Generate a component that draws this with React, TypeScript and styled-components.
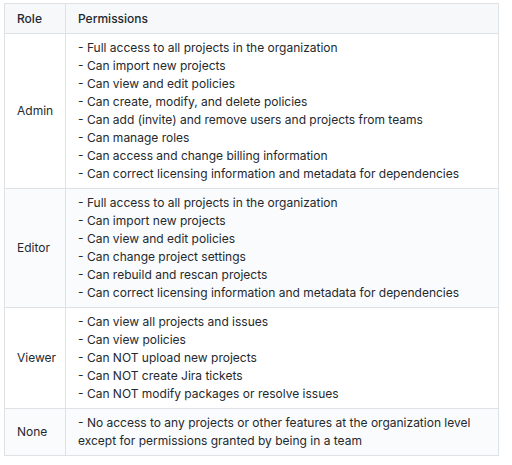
import React from "react";
import styled, { createGlobalStyle } from "styled-components";

const Global = createGlobalStyle`
  html, body { margin: 0; padding: 0; background: #ffffff; }
  body { font-family: Inter, "Noto Sans", "Liberation Sans", sans-serif; }
`;

const Page = styled.div`
  padding: 3px 13px 0 4px;
  width: 512px;
  box-sizing: border-box;
`;

const Table = styled.table`
  border-collapse: collapse;
  width: 495px;
  table-layout: fixed;
  font-size: 12px;
  line-height: 18px;
  color: #24292e;
`;

const HeadCell = styled.th<{ $w?: number }>`
  text-align: left;
  font-weight: 500;
  background: #f6f8fa;
  border: 1px solid #dfe2e5;
  padding: 6px 12px 5px;
  ${(p) => (p.$w ? `width: ${p.$w}px;` : "")}
`;

const Row = styled.tr<{ $alt: boolean }>`
  background: ${(p) => (p.$alt ? "#fafbfc" : "#ffffff")};
`;

const RoleCell = styled.td`
  border: 1px solid #dfe2e5;
  padding: 5px 12px;
  vertical-align: middle;
`;

const PermCell = styled.td`
  border: 1px solid #dfe2e5;
  padding: 5px 12px;
  vertical-align: top;
`;

const Line = styled.div`
  white-space: nowrap;
`;

const data: { role: string; perms: string[] }[] = [
  {
    role: "Admin",
    perms: [
      "- Full access to all projects in the organization",
      "- Can import new projects",
      "- Can view and edit policies",
      "- Can create, modify, and delete policies",
      "- Can add (invite) and remove users and projects from teams",
      "- Can manage roles",
      "- Can access and change billing information",
      "- Can correct licensing information and metadata for dependencies",
    ],
  },
  {
    role: "Editor",
    perms: [
      "- Full access to all projects in the organization",
      "- Can import new projects",
      "- Can view and edit policies",
      "- Can change project settings",
      "- Can rebuild and rescan projects",
      "- Can correct licensing information and metadata for dependencies",
    ],
  },
  {
    role: "Viewer",
    perms: [
      "- Can view all projects and issues",
      "- Can view policies",
      "- Can NOT upload new projects",
      "- Can NOT create Jira tickets",
      "- Can NOT modify packages or resolve issues",
    ],
  },
  {
    role: "None",
    perms: [
      "- No access to any projects or other features at the organization level",
      "except for permissions granted by being in a team",
    ],
  },
];

export default function App() {
  return (
    <Page>
      <Global />
      <Table>
        <thead>
          <tr>
            <HeadCell $w={36}>Role</HeadCell>
            <HeadCell>Permissions</HeadCell>
          </tr>
        </thead>
        <tbody>
          {data.map((r, i) => (
            <Row key={r.role} $alt={i % 2 === 1}>
              <RoleCell>{r.role}</RoleCell>
              <PermCell>
                {r.perms.map((p) => (
                  <Line key={p}>{p}</Line>
                ))}
              </PermCell>
            </Row>
          ))}
        </tbody>
      </Table>
    </Page>
  );
}
